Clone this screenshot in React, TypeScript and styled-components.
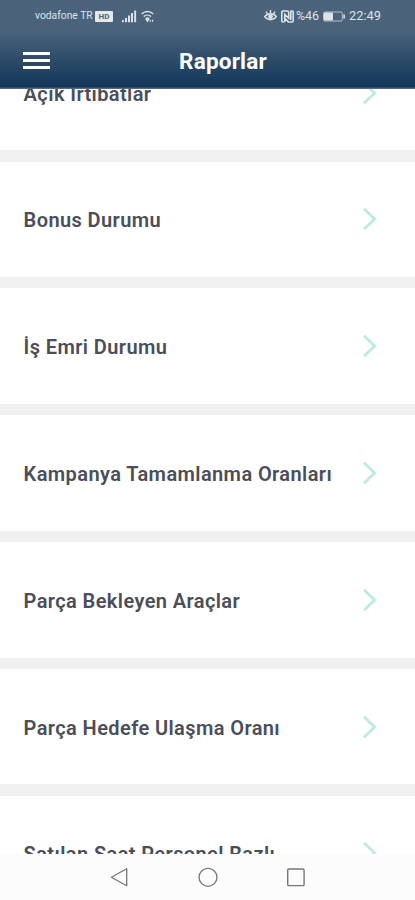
import React from "react";
import styled, { createGlobalStyle } from "styled-components";

const GlobalStyle = createGlobalStyle`
  *, *::before, *::after { box-sizing: border-box; }
  body { margin: 0; background: #fff; font-family: Roboto, "Noto Sans", sans-serif; }
`;

const Screen = styled.main`
  width: 415px;
  height: 900px;
  overflow: hidden;
  display: flex;
  flex-direction: column;
`;

const Header = styled.header`
  flex: none;
  height: 89px;
  color: #fff;
  background: linear-gradient(#4b647c 0, #4a637b 32px, #3c5872 45px, #1d3f60 76px, #12365a 86px, #1b3b5b 87px, #66798d 89px);
`;

const StatusBar = styled.div`
  height: 32px;
  padding: 0 34px 0 35px;
  display: flex;
  align-items: center;
  justify-content: space-between;
  color: #dce3e9;
`;

const StatusGroup = styled.div`
  display: flex;
  align-items: center;
  height: 16px;
`;

const Carrier = styled.span`
  width: 59px;
  white-space: nowrap;
  font-size: 10.3px;
  line-height: 16px;
`;

const HdBadge = styled.span`
  width: 18px;
  height: 11px;
  margin: 1px 9px 0 1px;
  border-radius: 1px;
  background: #e3e8ec;
  color: #4b647c;
  font-size: 8px;
  font-weight: 700;
  line-height: 11px;
  text-align: center;
`;

const StatusIcon = styled.svg<{ $gap?: number }>`
  display: block;
  flex: none;
  margin-right: ${({ $gap = 0 }) => $gap}px;
`;

const StatusText = styled.span<{ $width: number; $size: number }>`
  width: ${({ $width }) => $width}px;
  font-size: ${({ $size }) => $size}px;
  line-height: 16px;
  white-space: nowrap;
`;

const TitleBar = styled.div`
  height: 57px;
  padding: 0 23px;
  display: grid;
  grid-template-columns: 27px 1fr 27px;
  align-items: center;
`;

const MenuButton = styled.button`
  height: 18px;
  padding: 0;
  border: 0;
  background: none;
  display: flex;
  flex-direction: column;
  justify-content: space-between;
`;

const MenuLine = styled.span`
  width: 27px;
  height: 3.4px;
  background: #fff;
`;

const Title = styled.h1`
  margin: 1px 0 0 31px;
  justify-self: center;
  font-size: 22.5px;
  line-height: 28px;
  font-weight: 700;
  letter-spacing: 0.2px;
`;

const List = styled.ul`
  flex: 1;
  min-height: 0;
  margin: 0;
  padding: 0;
  overflow: hidden;
  list-style: none;
  background: #f0f0f0;
`;

const Row = styled.li`
  height: 115.4px;
  margin-bottom: 11.45px;
  padding: 0 37px 0 23.6px;
  display: flex;
  align-items: center;
  justify-content: space-between;
  background: #fff;
  &:first-child { margin-top: -54.2px; }
`;

const RowLabel = styled.span`
  color: #4b4e59;
  font-size: 20px;
  font-weight: 600;
  line-height: 28px;
  letter-spacing: 0.4px;
  white-space: nowrap;
  margin-top: 2px;
`;

const Chevron = styled.svg`
  display: block;
  flex: none;
`;

const NavigationBar = styled.nav`
  flex: none;
  height: 46px;
  padding: 0 109px;
  display: flex;
  align-items: center;
  justify-content: space-between;
  background: #fcfcfc;
`;

const NavButton = styled.button`
  width: 20px;
  height: 22px;
  padding: 0;
  border: 0;
  background: none;
  display: grid;
  place-items: center;
`;

const reports = [
  "Açık İrtibatlar",
  "Bonus Durumu",
  "İş Emri Durumu",
  "Kampanya Tamamlanma Oranları",
  "Parça Bekleyen Araçlar",
  "Parça Hedefe Ulaşma Oranı",
  "Satılan Saat Personel Bazlı",
];

function SignalIcon() {
  return (
    <StatusIcon width="15" height="13" viewBox="0 0 15 13" fill="currentColor" $gap={4}>
      <path d="M0 10h1.8v2.3H0zM3 8h2v4.3H3zM6 5.6h2v6.7H6zM9 3h2v9.3H9zM12.2.5h1.9v11.8h-1.9z" />
    </StatusIcon>
  );
}

function WifiIcon() {
  return (
    <StatusIcon width="13" height="13" viewBox="0 0 13 13" fill="none" stroke="currentColor" strokeWidth="1.4">
      <path d="M.7 4.1C4 .7 9 .7 12.2 4.1M2.7 6.6c2.1-2 5.3-2 7.4 0M4.7 8.8c1-.9 2.5-.9 3.5 0" />
      <path d="M5.2 9.4h2.4l-1.2 2zM9.2 9.8v2M11.6 9.8v2" fill="currentColor" strokeWidth="1.2" />
    </StatusIcon>
  );
}

function EyeIcon() {
  return (
    <StatusIcon width="13" height="12" viewBox="0 0 13 12" fill="none" stroke="currentColor" strokeWidth="1.4" $gap={4}>
      <path d="M.7 6.7c2.9-4 8.7-4 11.6 0-2.9 4-8.7 4-11.6 0ZM6.5 0v3M2 1.7l1.3 2M11 1.7l-1.3 2" />
      <circle cx="6.5" cy="6.7" r="1.7" fill="currentColor" />
    </StatusIcon>
  );
}

function NfcIcon() {
  return (
    <StatusIcon width="13" height="13" viewBox="0 0 13 13" fill="none" stroke="currentColor" strokeWidth="1.6" $gap={2}>
      <path d="M3.2 12H1.8a1 1 0 0 1-1-1V2a1 1 0 0 1 1-1h4.4a1.5 1.5 0 0 1 1.5 1.5v5.7L3.8 4.4V12M9.3 1h1.9a1 1 0 0 1 1 1v9a1 1 0 0 1-1 1H7.6L4 8.6M9.8 1v9" />
    </StatusIcon>
  );
}

function BatteryIcon() {
  return (
    <StatusIcon width="22" height="11" viewBox="0 0 22 11" fill="none" stroke="currentColor" $gap={4}>
      <rect x=".5" y="1" width="18.8" height="9" rx="1.5" opacity=".75" />
      <path d="M1.5 2h8v7h-8z" fill="currentColor" />
      <path d="M21.1 3.5v4" strokeWidth="1.6" />
    </StatusIcon>
  );
}

export default function App() {
  return (
    <>
      <GlobalStyle />
      <Screen>
        <Header>
          <StatusBar>
            <StatusGroup>
              <Carrier>vodafone TR</Carrier>
              <HdBadge>HD</HdBadge>
              <SignalIcon />
              <WifiIcon />
            </StatusGroup>
            <StatusGroup>
              <EyeIcon />
              <NfcIcon />
              <StatusText $width={27} $size={12.4}>%46</StatusText>
              <BatteryIcon />
              <StatusText $width={32} $size={12.8}>22:49</StatusText>
            </StatusGroup>
          </StatusBar>
          <TitleBar>
            <MenuButton aria-label="Menü">
              <MenuLine /><MenuLine /><MenuLine />
            </MenuButton>
            <Title>Raporlar</Title>
          </TitleBar>
        </Header>
        <List>
          {reports.map((label) => (
            <Row key={label}>
              <RowLabel>{label}</RowLabel>
              <Chevron width="15" height="24" viewBox="0 0 15 24" fill="none" stroke="#bdebe1" strokeWidth="2.9">
                <path d="M1 1.8 11.6 12 1 22.2" />
              </Chevron>
            </Row>
          ))}
        </List>
        <NavigationBar>
          <NavButton aria-label="Geri">
            <svg width="20" height="22" viewBox="0 0 20 22" fill="none" stroke="#777" strokeWidth="1.3" strokeLinejoin="round">
              <path d="M17.7 2.8v17L2.4 11.3Z" />
            </svg>
          </NavButton>
          <NavButton aria-label="Ana ekran">
            <svg width="20" height="20" viewBox="0 0 20 20" fill="none" stroke="#777" strokeWidth="1.3">
              <circle cx="10" cy="10.3" r="9" />
            </svg>
          </NavButton>
          <NavButton aria-label="Son uygulamalar">
            <svg width="20" height="20" viewBox="0 0 20 20" fill="none" stroke="#777" strokeWidth="1.4">
              <rect x="1.7" y="2" width="16.4" height="16.6" rx="1.2" />
            </svg>
          </NavButton>
        </NavigationBar>
      </Screen>
    </>
  );
}
